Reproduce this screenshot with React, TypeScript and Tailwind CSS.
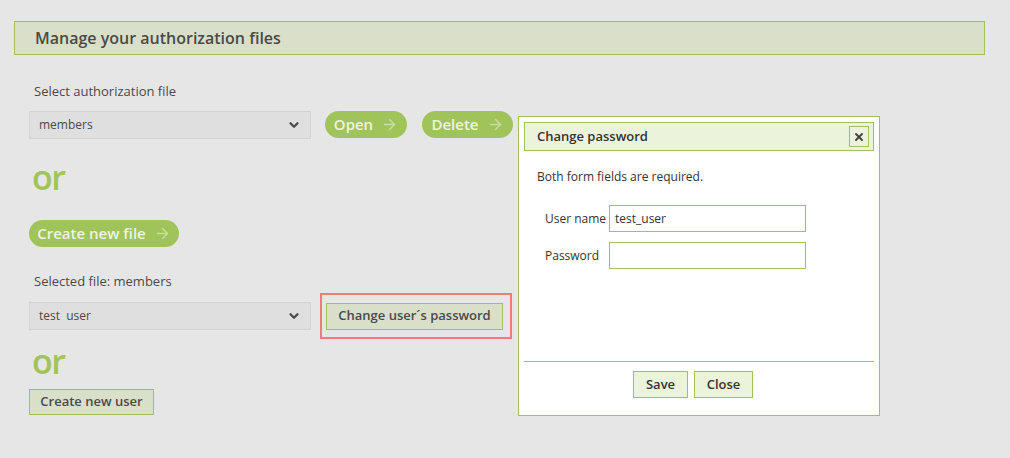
import { ChevronDown, ArrowRight, X } from "lucide-react";

function Select({ value }: { value: string }) {
  return (
    <div className="flex h-[28px] w-[282px] items-center justify-between border border-[#d3d3d3] bg-[#dfdfdf] pl-[9px] pr-[9px] text-[12px] text-[#4a4a4a]">
      <span className="whitespace-pre">{value}</span>
      <ChevronDown className="h-[14px] w-[14px] text-[#4a4a4a]" strokeWidth={4} />
    </div>
  );
}

function PillButton({ label, width }: { label: string; width: string }) {
  return (
    <button
      className={`flex h-[27px] ${width} items-center justify-center gap-[8px] rounded-full bg-[#a1c45a] text-[15px] font-semibold text-[#eef3e2]`}
    >
      <span>{label}</span>
      <ArrowRight className="h-[17px] w-[17px] text-[#c9dea1]" strokeWidth={2} />
    </button>
  );
}

function Or() {
  return (
    <div className="text-[34px] font-semibold leading-none tracking-[-1.5px] text-[#a1c45a]">or</div>
  );
}

export default function App() {
  return (
    <div
      className="relative h-[458px] w-[1010px] overflow-hidden bg-[#e6e6e6] px-[14px] pt-[21px] text-[#4a4a4a]"
      style={{ fontFamily: '"Open Sans", "DejaVu Sans", sans-serif' }}
    >
      {/* Page title */}
      <div className="flex h-[34px] w-[971px] items-center border border-[#9fc35a] bg-[#dadfca] pl-[20px] text-[16px] font-semibold text-[#4a4a4a]">
        Manage your authorization files
      </div>

      <div className="pl-[15px]">
        <div className="mt-[27px] pl-[5px] text-[13px]">Select authorization file</div>
        <div className="mt-[9px] flex items-center">
          <Select value="members" />
          <div className="ml-[14px]">
            <PillButton label="Open" width="w-[82px]" />
          </div>
          <div className="ml-[15px]">
            <PillButton label="Delete" width="w-[91px]" />
          </div>
        </div>

        <div className="mt-[21px] pl-[3px]">
          <Or />
        </div>

        <div className="mt-[26px]">
          <PillButton label="Create new file" width="w-[150px]" />
        </div>

        <div className="mt-[25px] pl-[5px] text-[13px]">Selected file: members</div>
        <div className="mt-[11px] flex h-[28px] items-center">
          <Select value="test  user" />
          <div className="-my-[9px] ml-[9px] flex h-[46px] w-[192px] items-center border-2 border-[#ee7a7a] pl-[4px]">
            <button className="h-[27px] w-[177px] border border-[#9fc35a] bg-[#dadfca] text-[13px] font-semibold text-[#4a4a4a]">
              Change user´s password
            </button>
          </div>
          <button className="ml-[7px] h-[27px] w-[110px] border border-[#9fc35a] bg-[#dadfca] text-[13px] font-semibold">
            Delete user
          </button>
        </div>

        <div className="mt-[14px] pl-[3px]">
          <Or />
        </div>

        <button className="mt-[11px] h-[26px] w-[125px] border border-[#9fc35a] bg-[#dadfca] text-[13px] font-semibold text-[#4a4a4a]">
          Create new user
        </button>
      </div>

      {/* Modal dialog */}
      <div className="absolute left-[518px] top-[116px] flex h-[300px] w-[362px] flex-col border border-[#9fc35a] bg-white p-[5px]">
        <div className="flex h-[29px] items-center justify-between border border-[#9fc35a] bg-[#ebf4da] pl-[12px] pr-[4px]">
          <span className="text-[13px] font-semibold text-[#333]">Change password</span>
          <button className="flex h-[21px] w-[20px] items-center justify-center border border-[#9fc35a] bg-[#ebf4da]">
            <X className="h-[12px] w-[12px] text-[#444]" strokeWidth={4} />
          </button>
        </div>

        <div className="mt-[17px] pl-[13px] text-[12px] text-[#333]">Both form fields are required.</div>

        <div className="mt-[19px] flex items-center pl-[21px]">
          <span className="w-[64px] text-[12px] text-[#333]">User name</span>
          <div className="flex h-[27px] w-[197px] items-center border border-[#9fc35a] pl-[5px] text-[12px] text-[#333]">
            test_user
          </div>
        </div>
        <div className="mt-[10px] flex items-center pl-[21px]">
          <span className="w-[64px] text-[12px] text-[#333]">Password</span>
          <div className="h-[27px] w-[197px] border border-[#9fc35a]" />
        </div>

        <div className="flex-1" />
        <div className="h-px bg-[#9fc35a]" />
        <div className="mb-[12px] mt-[9px] flex justify-center gap-[6px] pr-[12px]">
          <button className="h-[27px] w-[55px] border border-[#9fc35a] bg-[#ebf4da] text-[13px] font-semibold text-[#333]">
            Save
          </button>
          <button className="h-[27px] w-[59px] border border-[#9fc35a] bg-[#ebf4da] text-[13px] font-semibold text-[#333]">
            Close
          </button>
        </div>
      </div>
    </div>
  );
}
